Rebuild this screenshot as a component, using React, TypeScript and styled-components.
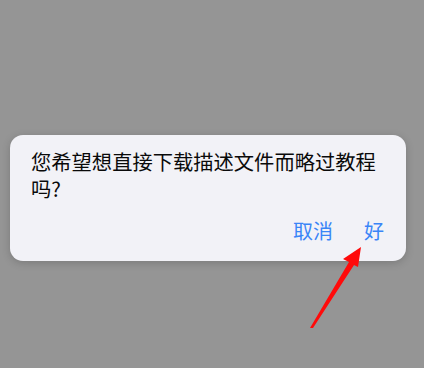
import React from "react";
import styled, { createGlobalStyle } from "styled-components";

const Global = createGlobalStyle`
  html, body { margin: 0; padding: 0; background: #959595; }
  body { width: 424px; height: 368px; overflow: hidden; }
`;

const Screen = styled.div`
  position: relative;
  width: 424px;
  height: 368px;
  background: #959595;
  padding: 135px 18px 0 10px;
  box-sizing: border-box;
  font-family: "Noto Sans CJK SC", "Noto Sans", sans-serif;
`;

const Dialog = styled.div`
  width: 396px;
  height: 126px;
  box-sizing: border-box;
  background: #f2f2f7;
  border-radius: 13px;
  box-shadow: 0 2px 8px rgba(0, 0, 0, 0.18);
  padding: 13px 22px 0 21px;
  display: flex;
  flex-direction: column;
`;

const Message = styled.div`
  font-size: 20.3px;
  line-height: 27px;
  color: #0a0a0a;
  margin-right: -16px;
`;

const Actions = styled.div`
  display: flex;
  justify-content: flex-end;
  gap: 31px;
  margin-top: 15px;
`;

const ActionButton = styled.button`
  border: none;
  background: none;
  padding: 0;
  font-family: inherit;
  font-size: 20px;
  line-height: 27px;
  color: #3a85f7;
`;

const Arrow = styled.svg`
  position: absolute;
  left: 0;
  top: 0;
  pointer-events: none;
`;

export default function App() {
  return (
    <>
      <Global />
      <Screen>
        <Dialog>
          <Message>您希望想直接下载描述文件而略过教程吗?</Message>
          <Actions>
            <ActionButton>取消</ActionButton>
            <ActionButton>好</ActionButton>
          </Actions>
        </Dialog>
        <Arrow width="424" height="368" viewBox="0 0 424 368">
          <polygon
            points="361,247 343,259 349,262 310,328 313,328 354,265 358,267"
            fill="#ff0a0a"
          />
        </Arrow>
      </Screen>
    </>
  );
}
